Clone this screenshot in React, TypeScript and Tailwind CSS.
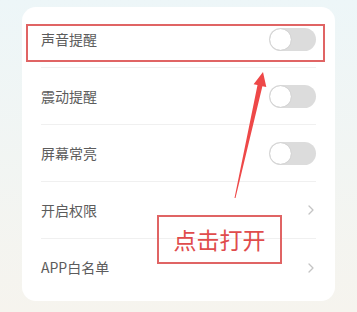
import React from 'react';

const rows = [
  { label: '声音提醒', kind: 'toggle' },
  { label: '震动提醒', kind: 'toggle' },
  { label: '屏幕常亮', kind: 'toggle' },
  { label: '开启权限', kind: 'link' },
  { label: 'APP白名单', kind: 'link' },
];

function Toggle() {
  return (
    <div className="w-[47px] h-[23px] rounded-full bg-[#dcdcdc] p-[1px] flex items-center">
      <div className="w-[21px] h-[21px] rounded-full bg-white shadow-[0_0_1px_rgba(0,0,0,0.25)]" />
    </div>
  );
}

function Chevron() {
  return (
    <svg width="8" height="12" viewBox="0 0 8 12" className="mr-[1px]">
      <path d="M2 2 L6 6 L2 10" fill="none" stroke="#c4c4c4" strokeWidth="1.3" strokeLinecap="round" strokeLinejoin="round" />
    </svg>
  );
}

export default function App() {
  return (
    <div
      className="relative w-[357px] h-[312px] overflow-hidden bg-gradient-to-b from-[#edf6f8] to-[#f6f4ee] px-[22px] pt-[7px]"
      style={{ fontFamily: '"Noto Sans CJK SC", "Noto Sans", sans-serif' }}
    >
      {/* Settings card */}
      <div className="bg-white rounded-[14px] px-[19px] pt-[4px] pb-[5px]">
        {rows.map((row, i) => (
          <div
            key={row.label}
            className={`h-[57px] flex items-center justify-between ${i < rows.length - 1 ? 'border-b border-[#f0f0f0]' : ''}`}
          >
            <span className="text-[14px] text-[#5c5c5c]">{row.label}</span>
            {row.kind === 'toggle' ? <Toggle /> : <Chevron />}
          </div>
        ))}
      </div>

      {/* Annotation: highlight box */}
      <div className="absolute left-[26px] top-[24px] w-[299px] h-[38px] border-2 border-[#e06464]" />

      {/* Annotation: arrow */}
      <svg className="absolute left-0 top-0" width="357" height="312" viewBox="0 0 357 312">
        <polygon
          points="263,72 266.3,87.1 262.4,86.2 235.5,198.1 234.5,197.9 257.5,85.1 253.6,84.3"
          fill="#ee4848"
        />
      </svg>

      {/* Annotation: callout */}
      <div className="absolute left-[157px] top-[215px] w-[125px] h-[49px] border-2 border-[#e06464] flex items-center justify-center">
        <span className="text-[23px] leading-none text-[#e04c4c]">点击打开</span>
      </div>
    </div>
  );
}
